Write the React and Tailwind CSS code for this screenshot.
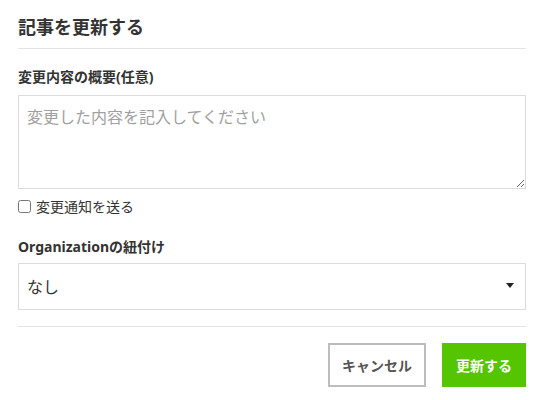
import React from 'react';

const font = { fontFamily: '"Noto Sans", "Noto Sans CJK JP", sans-serif' };

export default function App() {
    return (
        <div className="w-[550px] h-[400px] bg-white pl-[18px] pr-[24px] text-[#333]" style={font}>
            {/* Header */}
            <div className="pt-[14px] pb-[7px] border-b border-[#e3e3e3]">
                <h1 className="text-[18px] leading-[27px] font-bold text-[#333]">記事を更新する</h1>
            </div>

            {/* Summary */}
            <label className="block mt-[17px] mb-[8px] text-[14px] leading-[21px] font-bold">
                変更内容の概要(任意)
            </label>
            <textarea
                className="block w-full h-[94px] border border-[#dcdcdc] px-[8px] py-[9px] text-[16px] leading-[24px] placeholder:text-[#a0a0a0] focus:outline-none"
                placeholder="変更した内容を記入してください"
            />
            <label className="flex items-center gap-[5px] mt-[7px] text-[14px] leading-[21px] text-[#333]">
                <input type="checkbox" className="m-0 w-[13px] h-[13px]" />
                変更通知を送る
            </label>

            {/* Organization */}
            <label className="block mt-[19px] mb-[6px] text-[14px] leading-[21px] font-bold">
                Organizationの紐付け
            </label>
            <div className="relative">
                <select className="block w-full h-[47px] border border-[#dcdcdc] bg-white px-[8px] text-[16px] text-[#333] appearance-none focus:outline-none">
                    <option>なし</option>
                </select>
                <svg className="absolute right-[12px] top-[20px] pointer-events-none" width="8" height="5" viewBox="0 0 8 5">
                    <path d="M0 0 H8 L4 5 Z" fill="#222" />
                </svg>
            </div>

            {/* Footer */}
            <div className="mt-[16px] border-t border-[#e3e3e3] pt-[16px] flex justify-end gap-[16px]">
                <button className="h-[44px] w-[98px] border-2 border-[#bdbdbd] bg-white text-[14px] font-bold text-[#555]">
                    キャンセル
                </button>
                <button className="h-[44px] w-[84px] bg-[#55c500] text-[14px] font-bold text-white">
                    更新する
                </button>
            </div>
        </div>
    );
}
